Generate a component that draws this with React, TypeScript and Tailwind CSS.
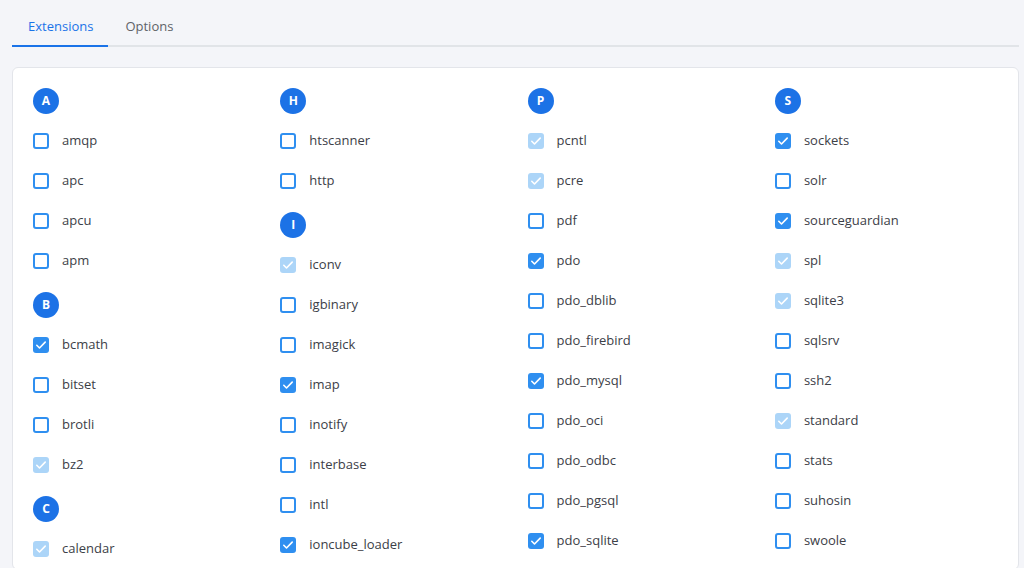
type Ext = { name: string; state?: "on" | "locked" };
type Group = { letter: string; items: Ext[] };

const columns: Group[][] = [
  [
    { letter: "A", items: [{ name: "amqp" }, { name: "apc" }, { name: "apcu" }, { name: "apm" }] },
    {
      letter: "B",
      items: [{ name: "bcmath", state: "on" }, { name: "bitset" }, { name: "brotli" }, { name: "bz2", state: "locked" }],
    },
    { letter: "C", items: [{ name: "calendar", state: "locked" }] },
  ],
  [
    { letter: "H", items: [{ name: "htscanner" }, { name: "http" }] },
    {
      letter: "I",
      items: [
        { name: "iconv", state: "locked" },
        { name: "igbinary" },
        { name: "imagick" },
        { name: "imap", state: "on" },
        { name: "inotify" },
        { name: "interbase" },
        { name: "intl" },
        { name: "ioncube_loader", state: "on" },
      ],
    },
  ],
  [
    {
      letter: "P",
      items: [
        { name: "pcntl", state: "locked" },
        { name: "pcre", state: "locked" },
        { name: "pdf" },
        { name: "pdo", state: "on" },
        { name: "pdo_dblib" },
        { name: "pdo_firebird" },
        { name: "pdo_mysql", state: "on" },
        { name: "pdo_oci" },
        { name: "pdo_odbc" },
        { name: "pdo_pgsql" },
        { name: "pdo_sqlite", state: "on" },
      ],
    },
  ],
  [
    {
      letter: "S",
      items: [
        { name: "sockets", state: "on" },
        { name: "solr" },
        { name: "sourceguardian", state: "on" },
        { name: "spl", state: "locked" },
        { name: "sqlite3", state: "locked" },
        { name: "sqlsrv" },
        { name: "ssh2" },
        { name: "standard", state: "locked" },
        { name: "stats" },
        { name: "suhosin" },
        { name: "swoole" },
      ],
    },
  ],
];

function Check({ state }: { state?: "on" | "locked" }) {
  if (!state) {
    return <span className="h-4 w-4 shrink-0 rounded-[3px] border-2 border-[#2f8ff0] bg-white" />;
  }
  return (
    <span
      className={
        state === "on"
          ? "flex h-4 w-4 shrink-0 items-center justify-center rounded-[3px] bg-[#2f8ff0]"
          : "flex h-4 w-4 shrink-0 items-center justify-center rounded-[3px] bg-[#acd5f8]"
      }
    >
      <svg viewBox="0 0 16 16" className="h-4 w-4" fill="none">
        <path d="M3.8 8.3l2.7 2.7 5.7-5.9" stroke="white" strokeWidth="1.6" strokeLinecap="round" strokeLinejoin="round" />
      </svg>
    </span>
  );
}

export default function App() {
  return (
    <div className="h-screen overflow-hidden bg-[#f4f5f9] pl-3 pr-[5px] font-['Open_Sans',sans-serif] text-[13px] text-[#3c4047]">
      <div className="flex border-b-2 border-[#e1e4e8]">
        <button className="-mb-[2px] border-b-2 border-[#1a73e8] pt-[17px] pr-[15px] pb-[9px] pl-4 leading-[19px] text-[#1a73e8]">
          Extensions
        </button>
        <button className="-mb-[2px] border-b-2 border-transparent pt-[17px] pr-4 pb-[9px] pl-[17px] leading-[19px] text-[#5f6368]">
          Options
        </button>
      </div>

      <div className="mt-5 rounded-md border border-[#e3e5ea] bg-white pt-[9px] pl-5">
        <div className="grid grid-cols-[repeat(4,247.3px)]">
          {columns.map((groups, i) => (
            <div key={i}>
              {groups.map((g) => (
                <div key={g.letter}>
                  <div className="pt-[11px] pb-[7px]">
                    <span className="flex h-[26px] w-[26px] items-center justify-center rounded-full bg-[#1c72e6] text-[12px] font-bold text-white">
                      {g.letter}
                    </span>
                  </div>
                  {g.items.map((it) => (
                    <label key={it.name} className="flex h-10 items-center gap-[13px]">
                      <Check state={it.state} />
                      <span>{it.name}</span>
                    </label>
                  ))}
                </div>
              ))}
            </div>
          ))}
        </div>
      </div>
    </div>
  );
}
